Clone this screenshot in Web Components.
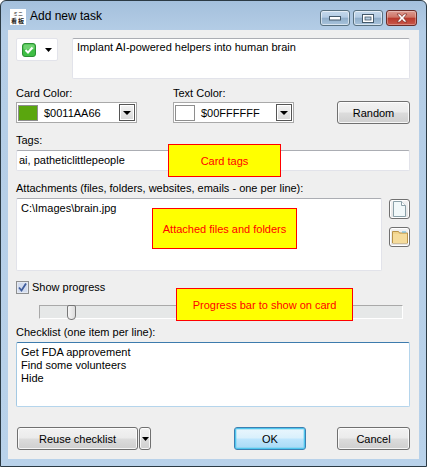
<!DOCTYPE html>
<html>
<head>
<meta charset="utf-8">
<title>Add new task</title>
<style>
  html, body { margin: 0; padding: 0; background: #fff; }
  body { font: 11px "Liberation Sans", sans-serif; color: #000; }
</style>
</head>
<body>
<template id="window-tpl">
  <style>
    :host {
      display: flex;
      flex-direction: column;
      width: 427px;
      height: 467px;
      box-sizing: border-box;
      border: 1px solid #2b3a44;
      border-radius: 6px 6px 0 0;
      background: linear-gradient(#a4c0dc 0, #b4cde6 30px, #b9d2ea 100%);
      padding: 0 7px 7px;
      overflow: hidden;
      position: relative;
    }
    .content {
      flex: 1;
      background: #efefef;
      padding: 8px 9px 0 8px;
      display: flex;
      flex-direction: column;
    }
  </style>
  <slot name="title"></slot>
  <div class="content"><slot></slot></div>
</template>

<template id="title-tpl">
  <style>
    :host { display: flex; align-items: center; height: 29px; color: #000; }
    .icon {
      width: 16px; height: 16px; margin: 2px 4px 0 2px; background: #fff;
      display: flex; flex-direction: column; align-items: center; overflow: hidden;
      font-family: "Noto Sans CJK JP", sans-serif; color: #222;
    }
    .icon .top { font-size: 5px; line-height: normal; }
    .icon .low { font-size: 6px; line-height: normal; font-weight: 700; letter-spacing: 1px; }
    .name { flex: 1; margin-top: 1px; font-size: 12px; }
    .caps { display: flex; gap: 3px; align-self: flex-start; margin: 9px 2px 0 0; }
    .cap {
      box-sizing: border-box;
      width: 30px; height: 16px; border: 1px solid #58707f; border-radius: 3px;
      background: linear-gradient(#c5d9ec 0, #b3cbe3 45%, #8fadc9 50%, #a9c4dc 100%);
      box-shadow: inset 0 0 0 1px rgba(255,255,255,.55);
      display: flex; align-items: center; justify-content: center;
    }
    .close {
      width: 31px;
      border-color: #6b2c28;
      background: linear-gradient(#dc9c92 0, #cf7466 45%, #b8382b 50%, #c9584b 100%);
      box-shadow: inset 0 0 0 1px rgba(255,255,255,.3);
    }
  </style>
  <span class="icon"><span class="top">ミニ</span><span class="low">看板</span></span>
  <span class="name"><slot></slot></span>
  <div class="caps">
    <div class="cap"><svg width="12" height="6"><rect x=".5" y="1.5" width="11" height="3.5" fill="#fff" stroke="#44596a"/></svg></div>
    <div class="cap"><svg width="12" height="9"><rect x=".5" y=".5" width="11" height="8" fill="#fff" stroke="#44596a"/><rect x="3" y="3" width="6" height="3" fill="#b5cbe0" stroke="#44596a" stroke-width=".8"/></svg></div>
    <div class="cap close"><svg width="14" height="10"><path d="M2 1h3l2 2.400L9 1h3L8.700 5 12 9H9L7 6.600 5 9H2l3.300-4z" fill="#fff" stroke="#7a2a22" stroke-width=".7"/></svg></div>
  </div>
</template>

<template id="box-tpl">
  <style>
    :host {
      display: block;
      box-sizing: border-box;
      background: #fff;
      border: 1px solid #e2e3ea;
      border-top-color: #abadb3;
      border-radius: 2px;
      padding: 1px 3px;
      line-height: 13px;
    }
    :host([focused]) {
      border-color: #b5d5ec;
      border-top-color: #3d7bad;
      border-left-color: #a4c9e3;
    }
    slot { display: block; white-space: pre-line; }
  </style>
  <slot></slot>
</template>

<template id="combo-tpl">
  <style>
    :host {
      display: flex; align-items: center; box-sizing: border-box;
      width: 121px; height: 21px; background: #fff; border: 1px solid #a9a9a9;
      padding: 0 1px;
    }
    .swatch { box-sizing: border-box; width: 20px; height: 16px; border: 1px solid #8e8e8e; background: var(--c); }
    .val { flex: 1; margin-left: 6px; }
    .arrow {
      box-sizing: border-box; width: 16px; height: 17px; border: 1px solid #555;
      background: linear-gradient(#f4f4f4, #d8d8d8);
      box-shadow: inset 0 0 0 1px #fff;
      display: flex; align-items: center; justify-content: center;
    }
    .arrow i { border: 4px solid transparent; border-top: 4px solid #000; border-bottom: 0; }
  </style>
  <div class="swatch"></div>
  <span class="val"><slot></slot></span>
  <div class="arrow"><i></i></div>
</template>

<template id="button-tpl">
  <style>
    :host {
      display: flex; align-items: center; justify-content: center; box-sizing: border-box;
      height: 23px; border: 1px solid #707070; border-radius: 3px;
      background: linear-gradient(#f2f2f2 0, #ebebeb 48%, #dcdcdc 52%, #cfcfcf 100%);
      box-shadow: inset 0 0 0 1px rgba(255,255,255,.8);
    }
    :host([primary]) {
      border-color: #3c7fb1;
      background: linear-gradient(#eaf6fd 0, #d9f0fc 48%, #bee6fd 52%, #a7d9f5 100%);
      box-shadow: inset 0 0 0 2px #5fc9ee55, inset 0 0 0 1px #48c6ef;
    }
  </style>
  <slot></slot>
</template>

<template id="note-tpl">
  <style>
    :host {
      position: absolute; box-sizing: border-box;
      display: flex; align-items: center; justify-content: center;
      background: #ff0; border: 1px solid #f00; color: #f00; white-space: nowrap;
    }
  </style>
  <slot></slot>
</template>

<template id="slider-tpl">
  <style>
    :host {
      display: block; position: relative; box-sizing: border-box; height: 14px;
      background: #e6e8e8; border: 1px solid #fff; border-top-color: #a9a9a9; border-left-color: #a9a9a9;
    }
    .thumb {
      position: absolute; left: 27px; top: -1px; width: 9px; height: 15px; box-sizing: border-box;
      border: 1px solid #777; border-radius: 2px 2px 4px 4px;
      background: linear-gradient(90deg, #f6f6f6, #dcdcdc);
    }
  </style>
  <div class="thumb"></div>
</template>

<template id="icon-btn-tpl">
  <style>
    :host {
      display: flex; align-items: center; justify-content: center; box-sizing: border-box;
      width: 21px; height: 20px; border: 1px solid #707070; border-radius: 3px;
      background: linear-gradient(#f2f2f2, #e4e4e4);
      box-shadow: inset 0 0 0 1px #fff;
    }
  </style>
  <slot></slot>
</template>

<add-task-window>
  <window-title slot="title">Add new task</window-title>

  <div style="display:flex;gap:14px">
    <div style="box-sizing:border-box;width:42px;height:23px;background:#fff;border:1px solid #e2e3ea;border-radius:2px;display:flex;align-items:center;padding-left:5px;gap:9px">
      <svg width="14" height="14" viewBox="0 0 14 14"><rect x=".5" y=".5" width="13" height="13" rx="2.500" fill="#3fbe45" stroke="#2c8f34"/><rect x="1.500" y="1.500" width="11" height="5" rx="1.500" fill="#8fe08e" opacity=".6"/><path d="M3.500 7l2.500 2.500 4.500-5" fill="none" stroke="#fff" stroke-width="2"/></svg>
      <svg width="7" height="4"><path d="M0 0h7L3.500 4z"/></svg>
    </div>
    <text-box style="flex:1;height:41px;padding:2px 4px">Implant AI-powered helpers into human brain</text-box>
  </div>

  <div style="display:flex;align-items:flex-end;margin-top:7px">
    <div style="width:157px">
      <div style="height:16px;line-height:15px">Card Color:</div>
      <color-combo color="#5aa60e">$0011AA66</color-combo>
    </div>
    <div style="flex:1">
      <div style="height:16px;line-height:15px">Text Color:</div>
      <color-combo color="#fff">$00FFFFFF</color-combo>
    </div>
    <win-button style="width:73px;margin-bottom:-1px">Random</win-button>
  </div>

  <div style="height:17px;line-height:15px;margin-top:10px">Tags:</div>
  <text-box style="height:21px;padding:3px 2px">ai, patheticlittlepeople</text-box>

  <div style="height:17px;line-height:15px;margin-top:10px">Attachments (files, folders, websites, emails - one per line):</div>
  <div style="display:flex;gap:7px">
    <text-box style="flex:1;height:73px;padding:3px 4px">C:\Images\brain.jpg</text-box>
    <div style="display:flex;flex-direction:column;gap:8px;padding-top:1px">
      <icon-button><svg width="13" height="16" viewBox="0 0 13 16"><path d="M.5.5h8l4 4v11H.5z" fill="#f1f8f9" stroke="#8aa0a8"/><path d="M8.500.5v4h4" fill="#fff" stroke="#8aa0a8"/></svg></icon-button>
      <icon-button><svg width="16" height="14" viewBox="0 0 16 14"><path d="M.5 3V1.500h6l1 1.500h8v10H.5z" fill="#f1d48c" stroke="#b8934a"/><rect x="1" y="4" width="14" height="9" fill="#f5dc9c"/><rect x="10" y="1.500" width="4" height="1" fill="#5fb5d8"/></svg></icon-button>
    </div>
  </div>

  <div style="display:flex;align-items:center;gap:3px;height:16px;margin-top:8px">
    <svg width="13" height="13" viewBox="0 0 13 13"><rect x=".5" y=".5" width="12" height="12" fill="#e4e9f2" stroke="#8e8f8f"/><rect x="2" y="2" width="9" height="9" fill="#d3dcee"/><path d="M3 6.500l2.500 3L10 2.500" fill="none" stroke="#3f5c9c" stroke-width="1.800"/></svg>
    <span>Show progress</span>
  </div>

  <progress-slider style="margin:10px 7px 0 23px"></progress-slider>

  <div style="height:17px;line-height:15px;margin-top:6px">Checklist (one item per line):</div>
  <text-box focused style="height:65px;padding:3px 4px">Get FDA approvement
Find some volunteers
Hide</text-box>

  <div style="display:flex;margin-top:20px;padding-left:1px">
    <win-button style="width:121px">Reuse checklist</win-button>
    <win-button style="width:12px;margin-left:1px"><svg width="7" height="4"><path d="M0 0h7L3.500 4z"/></svg></win-button>
    <win-button primary style="width:72px;margin-left:83px">OK</win-button>
    <win-button style="width:73px;margin-left:31px">Cancel</win-button>
  </div>

  <note-tag style="left:167px;top:143px;width:113px;height:33px">Card tags</note-tag>
  <note-tag style="left:151px;top:207px;width:145px;height:41px">Attached files and folders</note-tag>
  <note-tag style="left:175px;top:287px;width:177px;height:33px">Progress bar to show on card</note-tag>
</add-task-window>

<script>
  function simple(tag, tplId) {
    customElements.define(tag, class extends HTMLElement {
      constructor() {
        super()
        this.attachShadow({ mode: 'open' })
        this.shadowRoot.appendChild(document.getElementById(tplId).content.cloneNode(true))
      }
    })
  }

  simple('add-task-window', 'window-tpl')
  simple('window-title', 'title-tpl')
  simple('text-box', 'box-tpl')
  simple('win-button', 'button-tpl')
  simple('note-tag', 'note-tpl')
  simple('progress-slider', 'slider-tpl')
  simple('icon-button', 'icon-btn-tpl')

  class ColorCombo extends HTMLElement {
    constructor() {
      super()
      this.attachShadow({ mode: 'open' })
      this.shadowRoot.appendChild(document.getElementById('combo-tpl').content.cloneNode(true))
    }

    connectedCallback() {
      this.style.setProperty('--c', this.getAttribute('color'))
    }
  }

  customElements.define('color-combo', ColorCombo)
</script>
</body>
</html>
